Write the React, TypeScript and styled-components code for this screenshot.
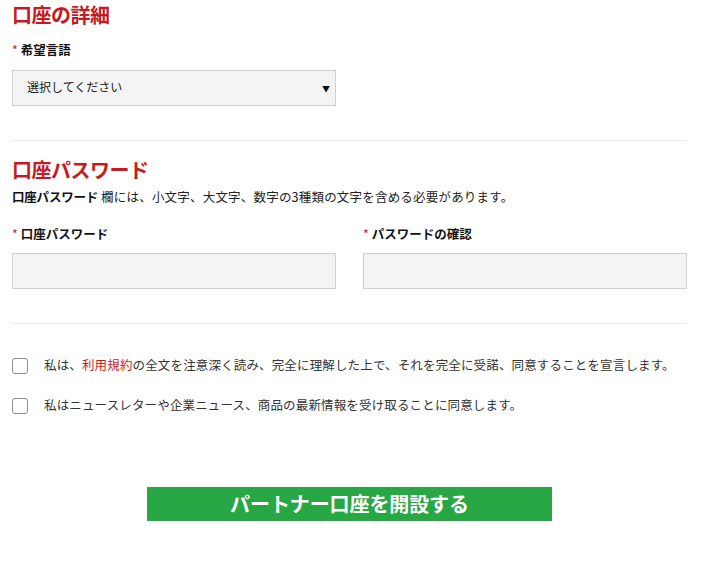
import React from "react";
import styled, { createGlobalStyle } from "styled-components";

const GlobalStyle = createGlobalStyle`
  html, body {
    margin: 0;
    padding: 0;
    background: #ffffff;
  }
  body {
    font-family: "Noto Sans CJK JP", "Noto Sans", sans-serif;
    color: #111;
  }
  * { box-sizing: border-box; }
`;

const Page = styled.div`
  width: 687px;
  padding-left: 12px;
  display: flex;
  flex-direction: column;
`;

const Heading = styled.h2<{ $top?: number }>`
  margin: ${(p) => p.$top ?? 0}px 0 0;
  font-size: 20px;
  line-height: 30px;
  font-weight: 700;
  color: #c51a22;
  letter-spacing: -0.5px;
`;

const Label = styled.label<{ $top?: number }>`
  display: block;
  margin-top: ${(p) => p.$top ?? 0}px;
  font-size: 12.5px;
  line-height: 20px;
  font-weight: 700;
  color: #111;
`;

const Star = styled.span`
  color: #c51a22;
  font-weight: 400;
  margin-right: 3px;
`;

const SelectWrap = styled.div`
  position: relative;
  margin-top: 10px;
  width: 324px;
  &::after {
    content: "▼";
    position: absolute;
    right: 6px;
    top: 50%;
    transform: translateY(-50%);
    font-size: 8px;
    color: #111;
    pointer-events: none;
  }
`;

const Select = styled.select`
  appearance: none;
  -webkit-appearance: none;
  width: 100%;
  height: 36px;
  padding: 0 0 3px 14px;
  border: 1px solid #cfcfcf;
  background: #f4f4f4;
  font-family: inherit;
  font-size: 12px;
  color: #222;
  border-radius: 0;
  outline: none;
`;

const Divider = styled.hr<{ $top: number }>`
  margin: ${(p) => p.$top}px 0 0;
  border: 0;
  height: 1px;
  background: #ececec;
`;

const Desc = styled.p`
  margin: 0;
  font-size: 12.5px;
  line-height: 24px;
  color: #222;
  letter-spacing: 0.2px;
  b {
    font-weight: 700;
    color: #111;
    letter-spacing: -0.2px;
  }
`;

const Columns = styled.div`
  display: grid;
  grid-template-columns: 324px 324px;
  column-gap: 27px;
  margin-top: 15px;
`;

const Field = styled.div`
  display: flex;
  flex-direction: column;
  gap: 9px;
`;

const Input = styled.input`
  width: 100%;
  height: 36px;
  border: 1px solid #d0d0d0;
  background: #f4f4f4;
  padding: 0 12px;
  font-family: inherit;
  font-size: 13px;
  border-radius: 0;
  outline: none;
`;

const Checks = styled.div`
  display: flex;
  flex-direction: column;
  gap: 16px;
  margin-top: 28px;
`;

const CheckRow = styled.label`
  display: flex;
  align-items: center;
  gap: 16px;
  height: 24px;
  font-size: 12.5px;
  color: #333;
  letter-spacing: 0.15px;
`;

const Box = styled.input`
  appearance: none;
  -webkit-appearance: none;
  margin: 0;
  width: 16px;
  height: 16px;
  flex: none;
  border: 1px solid #8f8f8f;
  border-radius: 3px;
  background: #fff;
  position: relative;
  top: 2px;
`;

const Link = styled.a`
  color: #c51a22;
  text-decoration: none;
`;

const ButtonRow = styled.div`
  display: flex;
  justify-content: center;
  margin-top: 71px;
`;

const Submit = styled.button`
  width: 405px;
  height: 34px;
  border: 0;
  border-radius: 0;
  background: #28a745;
  color: #fff;
  font-family: inherit;
  font-size: 20px;
  font-weight: 700;
  line-height: 34px;
  padding: 0;
  letter-spacing: -0.1px;
`;

export default function App() {
  return (
    <>
      <GlobalStyle />
      <Page>
        <Heading>口座の詳細</Heading>
        <Label $top={10}>
          <Star>*</Star>希望言語
        </Label>
        <SelectWrap>
          <Select defaultValue="">
            <option value="">選択してください</option>
            <option value="ja">日本語</option>
            <option value="en">English</option>
          </Select>
        </SelectWrap>

        <Divider $top={34} />

        <Heading $top={14}>口座パスワード</Heading>
        <Desc>
          <b>口座パスワード</b> 欄には、小文字、大文字、数字の3種類の文字を含める必要があります。
        </Desc>

        <Columns>
          <Field>
            <Label>
              <Star>*</Star>口座パスワード
            </Label>
            <Input type="password" />
          </Field>
          <Field>
            <Label>
              <Star>*</Star>パスワードの確認
            </Label>
            <Input type="password" />
          </Field>
        </Columns>

        <Divider $top={34} />

        <Checks>
          <CheckRow>
            <Box type="checkbox" />
            <span>
              私は、<Link href="#">利用規約</Link>の全文を注意深く読み、完全に理解した上で、それを完全に受諾、同意することを宣言します。
            </span>
          </CheckRow>
          <CheckRow>
            <Box type="checkbox" />
            <span>私はニュースレターや企業ニュース、商品の最新情報を受け取ることに同意します。</span>
          </CheckRow>
        </Checks>

        <ButtonRow>
          <Submit type="button">パートナー口座を開設する</Submit>
        </ButtonRow>
      </Page>
    </>
  );
}
